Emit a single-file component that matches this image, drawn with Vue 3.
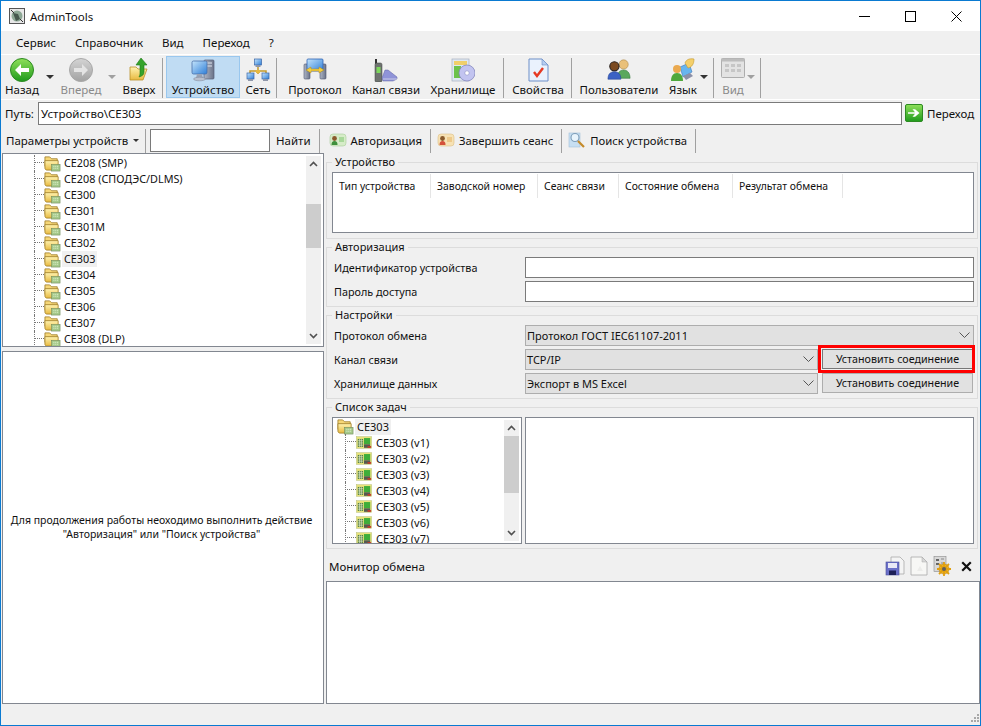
<template>
  <div class="window">
    <svg class="defs" aria-hidden="true">
      <defs>
        <linearGradient id="gGreen" x1="0" y1="0" x2="0" y2="1"><stop offset="0" stop-color="#8fe05a"/><stop offset="1" stop-color="#1f9a1c"/></linearGradient>
        <linearGradient id="gGrey" x1="0" y1="0" x2="0" y2="1"><stop offset="0" stop-color="#d4d4d4"/><stop offset="1" stop-color="#a2a2a2"/></linearGradient>
        <linearGradient id="gFolder" x1="0" y1="0" x2="0" y2="1"><stop offset="0" stop-color="#fff3b0"/><stop offset="1" stop-color="#e8b93f"/></linearGradient>
        <linearGradient id="gBlue" x1="0" y1="0" x2="1" y2="1"><stop offset="0" stop-color="#c4e4fb"/><stop offset="1" stop-color="#2f7fd8"/></linearGradient>
        <linearGradient id="gOlive" x1="0" y1="0" x2="1" y2="0"><stop offset="0" stop-color="#aeb6c6"/><stop offset="1" stop-color="#6b7388"/></linearGradient>
      </defs>

      <symbol id="back" viewBox="0 0 24 24">
        <circle cx="12" cy="12" r="11.5" fill="url(#gGreen)" stroke="#2d8a22"/>
        <path d="M5 12l6-6v4h8v4h-8v4z" fill="#fff"/>
      </symbol>
      <symbol id="forward" viewBox="0 0 24 24">
        <circle cx="12" cy="12" r="11.5" fill="url(#gGrey)" stroke="#a8a8a8"/>
        <path d="M19 12l-6-6v4H5v4h8v4z" fill="#e4e4e4"/>
      </symbol>
      <symbol id="up" viewBox="0 0 24 24">
        <path d="M3 9h6l2 2h9l-4 11H3z" fill="url(#gFolder)" stroke="#b98f2a" stroke-width=".8"/>
        <path d="M14 0l6 7h-3v7c0 3-2 4-5 5 1-2 1-3 1-5V7H9z" fill="#35a32b" stroke="#1f7a1a" stroke-width=".6"/>
      </symbol>
      <symbol id="device" viewBox="0 0 24 24">
        <rect x="13" y="2" width="10" height="19" rx="1" fill="url(#gOlive)" stroke="#586078" stroke-width=".7"/>
        <path d="M15 5h6M15 8h6" stroke="#dfe4ee"/>
        <rect x="1" y="3" width="15" height="13" rx="1.500" fill="url(#gBlue)" stroke="#4a6fa8" stroke-width=".8"/>
        <path d="M6 16h5l1 4H5z" fill="#9aa3b5"/>
        <ellipse cx="8.500" cy="21" rx="6" ry="1.800" fill="#b9c0ce" stroke="#7d8599" stroke-width=".5"/>
      </symbol>
      <symbol id="network" viewBox="0 0 24 24">
        <path d="M12 6v10M4 17V13h16v4" fill="none" stroke="#c49a2a" stroke-width="1.500"/>
        <rect x="8.500" y="1" width="7" height="6" fill="url(#gBlue)" stroke="#3a66a8" stroke-width=".7"/>
        <rect x="9.500" y="7" width="5" height="2" fill="#8f97aa"/>
        <rect x="1" y="15" width="7" height="6" fill="url(#gBlue)" stroke="#3a66a8" stroke-width=".7"/>
        <rect x="2" y="21" width="5" height="2" fill="#8f97aa"/>
        <rect x="16" y="15" width="7" height="6" fill="url(#gBlue)" stroke="#3a66a8" stroke-width=".7"/>
        <rect x="17" y="21" width="5" height="2" fill="#8f97aa"/>
        <rect x="10" y="12" width="4" height="3" fill="#e8b93f"/>
      </symbol>
      <symbol id="protocol" viewBox="0 0 24 24">
        <rect x="1" y="6" width="6" height="15" rx="1" fill="url(#gOlive)" stroke="#4d5670" stroke-width=".6"/>
        <rect x="17" y="6" width="6" height="15" rx="1" fill="url(#gOlive)" stroke="#4d5670" stroke-width=".6"/>
        <rect x="4" y="1" width="16" height="12" rx="1" fill="url(#gBlue)" stroke="#2e62b4" stroke-width=".8"/>
        <path d="M3 12l5-3v2h8V9l5 3-5 3v-2H8v2z" fill="#f4d03f" stroke="#b48a1a" stroke-width=".5"/>
      </symbol>
      <symbol id="channel" viewBox="0 0 24 24">
        <rect x="1" y="1" width="2" height="5" fill="#333"/>
        <rect x="1" y="5" width="7" height="19" rx="1.500" fill="#6f7370" stroke="#3e403e" stroke-width=".5"/>
        <rect x="2.500" y="9" width="4" height="6" fill="#7dd85c"/>
        <path d="M8 20l3-8h3l9 7v2l-4 2H9z" fill="#8f93d8" stroke="#5d60a0" stroke-width=".5"/>
        <path d="M9 21h14" stroke="#c9cbe8"/>
      </symbol>
      <symbol id="storage" viewBox="0 0 24 24">
        <rect x="1" y="1" width="17" height="22" fill="#dfe8f2" stroke="#a6b0c0" stroke-width=".7"/>
        <rect x="3" y="3" width="13" height="4" fill="#f0cf6a"/>
        <rect x="3" y="8" width="7" height="12" fill="#6cc24a"/>
        <circle cx="16" cy="15" r="8" fill="#c2c4f0" stroke="#7d80b8" stroke-width=".7"/>
        <circle cx="16" cy="15" r="2.200" fill="#fff" stroke="#7d80b8" stroke-width=".5"/>
      </symbol>
      <symbol id="props" viewBox="0 0 24 24">
        <path d="M3 1h13l6 6v16H3z" fill="#eaf2fd" stroke="#6d8fc8"/>
        <path d="M16 1v6h6z" fill="#b6cdf0" stroke="#6d8fc8" stroke-width=".6"/>
        <path d="M8 14l3 4 6-8" fill="none" stroke="#e63a24" stroke-width="2.400"/>
      </symbol>
      <symbol id="users" viewBox="0 0 26 24">
        <circle cx="18" cy="6" r="5" fill="#e9c07a" stroke="#a88445" stroke-width=".6"/>
        <path d="M11 21c0-6 3-9 7-9s7 3 7 9z" fill="#5aa85c" stroke="#33783a" stroke-width=".6"/>
        <circle cx="8" cy="8" r="5" fill="#7b4a20" stroke="#2a2320" stroke-width="1.200"/>
        <path d="M1 22c0-6 3-8 7-8s7 2 7 8z" fill="#3b62c4" stroke="#284694" stroke-width=".6"/>
      </symbol>
      <symbol id="lang" viewBox="0 0 24 24">
        <path d="M9 9l9-4 3 9-9 5z" fill="#67b5ee" stroke="#3e74b5" stroke-width=".6"/>
        <path d="M14 5c1-3 4-5 9-4 0 5-2 8-6 9z" fill="#f4cf6a" stroke="#c2982f" stroke-width=".6"/>
        <circle cx="6" cy="11" r="4" fill="#eaa94f"/>
        <path d="M0 23c0-5 2-8 6-8s6 3 6 8z" fill="#4ea83c"/>
        <path d="M12 18l7-3 3 3-7 4z" fill="#8b90a8"/>
      </symbol>
      <symbol id="view" viewBox="0 0 24 24">
        <rect x=".5" y=".5" width="23" height="19" rx="1" fill="#e3e3e3" stroke="#adadad"/>
        <rect x=".5" y=".5" width="23" height="3" fill="#bcbcbc"/>
        <path d="M4 6h4v3H4zM10 6h4v3h-4zM16 6h4v3h-4zM4 11h4v3H4zM10 11h4v3h-4zM16 11h4v3h-4z" fill="#c6c6c6"/>
      </symbol>
      <symbol id="go" viewBox="0 0 18 18">
        <rect x=".5" y=".5" width="17" height="17" rx="1.500" fill="url(#gGreen)" stroke="#2d8a22"/>
        <path d="M3 9.800h7l-2.500 3h2.600L14.500 9 10.100 5.200H7.500l2.500 3H3z" fill="#fff"/>
      </symbol>
      <symbol id="authOn" viewBox="0 0 18 18">
        <rect x="1" y="3" width="16" height="12" rx="3" fill="#d6ecc8" stroke="#a9cf9a" stroke-width=".6"/>
        <circle cx="5.500" cy="7.500" r="2.400" fill="#8a5a2c"/>
        <path d="M2.500 14c0-3 1-4 3-4s3 1 3 4z" fill="#3f8f3c"/>
        <rect x="10" y="6" width="5" height="5" fill="#a8d89a"/>
      </symbol>
      <symbol id="authOff" viewBox="0 0 18 18">
        <rect x="1" y="3" width="16" height="12" rx="3" fill="#f7e2b4" stroke="#dcc087" stroke-width=".6"/>
        <circle cx="5.500" cy="7.500" r="2.400" fill="#8a5a2c"/>
        <path d="M2.500 14c0-3 1-4 3-4s3 1 3 4z" fill="#d4513a"/>
        <rect x="10" y="6" width="5" height="5" fill="#eec98a"/>
      </symbol>
      <symbol id="search" viewBox="0 0 18 18">
        <rect x="1" y="2" width="11" height="14" fill="#c7dff2" stroke="#a4c1da" stroke-width=".6"/>
        <circle cx="7" cy="6.500" r="4" fill="#e8f4fc" stroke="#7d9db8" stroke-width="1.100"/>
        <path d="M10 10l6 6" stroke="#c48a2a" stroke-width="2.200"/>
      </symbol>
      <symbol id="node" viewBox="0 0 18 18">
        <path d="M1 2h5l2 2h6v8H1z" fill="#f6d777" stroke="#a3822c" stroke-width=".9"/>
        <path d="M1 6h14v10H3c-1 0-2-1-2-2z" fill="url(#gFolder)" stroke="#a3822c" stroke-width=".9"/>
        <rect x="8" y="10" width="9" height="7" fill="#a5c98b" stroke="#6d8a5a" stroke-width=".6"/>
        <path d="M10 12h1M12 12h1M14 12h1M10 14h1M12 14h1M14 14h1" stroke="#eaf8d8"/>
      </symbol>
      <symbol id="task" viewBox="0 0 18 14">
        <rect x=".5" y=".5" width="17" height="13" fill="#e8e27a" stroke="#b8c27a" stroke-width=".6"/>
        <rect x="2" y="3" width="6" height="9" fill="#55803f"/>
        <path d="M2 5h6M2 7.500h6M2 10h6M4 3v9M6 3v9" stroke="#e8efd4" stroke-width=".7"/>
        <rect x="9" y="2" width="7" height="7" fill="#3fae3a"/>
        <rect x="9" y="9" width="7" height="4" fill="#565a50"/>
        <rect x="13" y="11" width="4" height="2" fill="#c63a2a"/>
      </symbol>
      <symbol id="save" viewBox="0 0 20 20">
        <path d="M6 1h9l4 4v13H6z" fill="#f4f4f4" stroke="#aaa" stroke-width=".8"/>
        <rect x="1" y="6" width="13" height="13" fill="#6a6fc8" stroke="#4a4e9a" stroke-width=".6"/>
        <rect x="3" y="7" width="9" height="5" fill="#e8e8f6"/>
        <rect x="4" y="14.500" width="7" height="4.500" fill="#1e2058"/>
      </symbol>
      <symbol id="doc" viewBox="0 0 20 20">
        <path d="M2 1h11l5 5v13H2z" fill="#f7f7f5" stroke="#a8a8a8" stroke-width=".8"/>
        <path d="M13 1v5h5z" fill="#d8d8d8" stroke="#a8a8a8" stroke-width=".5"/>
        <path d="M8 15l3-5 3 5z" fill="#ececea"/>
      </symbol>
      <symbol id="logcfg" viewBox="0 0 20 20">
        <rect x="1" y=".5" width="12" height="15" fill="#d8d8d8" stroke="#8a8a8a" stroke-width=".6"/>
        <path d="M3 3h3v2H3zM3 7h3v2H3z" fill="#666"/>
        <path d="M8 3h3M8 7h3" stroke="#888"/>
        <circle cx="11" cy="13" r="5" fill="#f0b322" stroke="#b87d10" stroke-width=".6"/>
        <path d="M11 6v14M4 13h14M6 8l10 10M16 8L6 18" stroke="#e0a010" stroke-width="1.800"/>
        <circle cx="11" cy="13" r="2" fill="#5f5f5f"/>
      </symbol>
    </svg>

    <header class="titlebar">
      <span class="app-icon">
        <svg viewBox="0 0 16 16" width="16" height="16">
          <rect x=".5" y=".5" width="15" height="15" fill="#e8e8e8" stroke="#555"/>
          <circle cx="8" cy="8" r="5.500" fill="#8ea896"/>
          <path d="M4 5l5 1 2 5-4 2z" fill="#46584e"/>
          <path d="M2 2l3 3M14 14l-3-3" stroke="#333"/>
        </svg>
      </span>
      <span class="app-name">AdminTools</span>
      <div class="win-btns">
        <svg width="11" height="11" viewBox="0 0 11 11"><path d="M0 5.500h11" stroke="#000"/></svg>
        <svg width="11" height="11" viewBox="0 0 11 11"><rect x=".5" y=".5" width="10" height="10" fill="none" stroke="#000"/></svg>
        <svg width="11" height="11" viewBox="0 0 11 11"><path d="M.5.500l10 10M10.500.500l-10 10" stroke="#000"/></svg>
      </div>
    </header>

    <nav class="menubar">
      <span v-for="m in menu" :key="m">{{ m }}</span>
    </nav>

    <div class="toolbar">
      <template v-for="t in toolbar" :key="t.label">
        <button class="tool" :class="{ active: t.active, off: t.off }" :style="{ width: t.w + 'px', marginLeft: (t.ml || 0) + 'px' }">
          <span class="tool-top">
            <svg class="tool-icon"><use :href="'#' + t.icon" /></svg>
            <i v-if="t.caret" class="caret" :class="{ grey: t.off }" :style="{ left: 24 + t.caret + 'px' }"></i>
          </span>
          <span>{{ t.label }}</span>
        </button>
        <span v-if="t.sep" class="sep" :style="{ marginLeft: t.sep + 'px' }"></span>
      </template>
    </div>

    <div class="path-row">
      <span class="path-label">Путь:</span>
      <div class="field path-field">Устройство\CE303</div>
      <svg class="go-icon"><use href="#go" /></svg>
      <span class="go-label">Переход</span>
    </div>

    <div class="search-row">
      <span class="params">Параметры устройств<i class="caret dark"></i></span>
      <span class="sep tall"></span>
      <div class="field search-field"></div>
      <span class="find">Найти</span>
      <span class="sep tall"></span>
      <template v-for="a in actions" :key="a.label">
        <span class="action"><svg class="action-icon" :style="{ marginLeft: a.ml + 'px' }"><use :href="'#' + a.icon" /></svg>{{ a.label }}</span>
        <span class="sep tall"></span>
      </template>
    </div>

    <main class="main">
      <section class="left">
        <div class="box tree-box">
          <div class="tree-list">
            <div v-for="d in devices" :key="d" class="tree-row">
              <i class="dots"></i>
              <svg class="node-icon"><use href="#node" /></svg>
              <span class="node-label" :class="{ picked: d === 'CE303' }">{{ d }}</span>
            </div>
          </div>
          <div class="scroll">
            <svg class="arrow" viewBox="0 0 9 6"><path d="M1 5l3.500-3.500L8 5" fill="none" stroke="#505050" stroke-width="1.600"/></svg>
            <div class="track"><i class="thumb thumb-tree"></i></div>
            <svg class="arrow" viewBox="0 0 9 6"><path d="M1 1l3.500 3.500L8 1" fill="none" stroke="#505050" stroke-width="1.600"/></svg>
          </div>
        </div>
        <div class="box hint-box">
          <p>Для продолжения работы неоходимо выполнить действие<br />"Авторизация" или "Поиск устройства"</p>
        </div>
      </section>

      <section class="right">
        <fieldset class="group group-device">
          <legend>Устройство</legend>
          <div class="box device-list">
            <span v-for="c in columns" :key="c.label" class="col" :style="{ width: c.w + 'px' }">{{ c.label }}</span>
          </div>
        </fieldset>

        <fieldset class="group group-form">
          <legend>Авторизация</legend>
          <div class="form-row"><label>Идентификатор устройства</label><div class="field grow"></div></div>
          <div class="form-row"><label>Пароль доступа</label><div class="field grow"></div></div>
        </fieldset>

        <fieldset class="group group-form">
          <legend>Настройки</legend>
          <div class="form-row">
            <label>Протокол обмена</label>
            <div class="combo grow">Протокол ГОСТ IEC61107-2011<svg viewBox="0 0 11 6"><path d="M.5.500l5 5 5-5" fill="none" stroke="#555"/></svg></div>
          </div>
          <div class="form-row">
            <label>Канал связи</label>
            <div class="combo grow">TCP/IP<svg viewBox="0 0 11 6"><path d="M.5.500l5 5 5-5" fill="none" stroke="#555"/></svg></div>
            <button class="connect marked">Установить соединение</button>
          </div>
          <div class="form-row">
            <label>Хранилище данных</label>
            <div class="combo grow">Экспорт в MS Excel<svg viewBox="0 0 11 6"><path d="M.5.500l5 5 5-5" fill="none" stroke="#555"/></svg></div>
            <button class="connect">Установить соединение</button>
          </div>
        </fieldset>

        <fieldset class="group group-tasks">
          <legend>Список задач</legend>
          <div class="tasks">
            <div class="box task-tree">
              <div class="task-list">
                <div class="task-root">
                  <svg class="node-icon"><use href="#node" /></svg>
                  <span class="node-label picked">CE303</span>
                </div>
                <div v-for="v in 7" :key="v" class="task-row">
                  <i class="dots short"></i>
                  <svg class="task-icon"><use href="#task" /></svg>
                  <span>CE303 (v{{ v }})</span>
                </div>
              </div>
              <div class="scroll">
                <svg class="arrow" viewBox="0 0 9 6"><path d="M1 5l3.500-3.500L8 5" fill="none" stroke="#505050" stroke-width="1.600"/></svg>
                <div class="track"><i class="thumb thumb-task"></i></div>
                <svg class="arrow" viewBox="0 0 9 6"><path d="M1 1l3.500 3.500L8 1" fill="none" stroke="#505050" stroke-width="1.600"/></svg>
              </div>
            </div>
            <div class="box task-detail"></div>
          </div>
        </fieldset>

        <div class="monitor-head">
          <span>Монитор обмена</span>
          <div class="monitor-tools">
            <svg><use href="#save" /></svg>
            <svg><use href="#doc" /></svg>
            <svg><use href="#logcfg" /></svg>
            <svg class="close-x" viewBox="0 0 9 9"><path d="M1 1l7 7M8 1L1 8" stroke="#111" stroke-width="1.800"/></svg>
          </div>
        </div>
        <div class="box monitor"></div>
      </section>
    </main>

    <footer class="statusbar">
      <svg class="grip" viewBox="0 0 12 12"><path d="M9 1h2v2H9zM6 4h2v2H6zM9 4h2v2H9zM3 7h2v2H3zM6 7h2v2H6zM9 7h2v2H9z" fill="#a8a8a8"/></svg>
    </footer>
  </div>
</template>

<script setup>
const menu = ['Сервис', 'Справочник', 'Вид', 'Переход', '?']

// w and ml are button widths and gaps, sep is the gap before the separator, caret is its offset from the icon
const toolbar = [
  { label: 'Назад', icon: 'back', w: 40, caret: 12 },
  { label: 'Вперед', icon: 'forward', w: 78, caret: 15, off: true },
  { label: 'Вверх', icon: 'up', w: 38, sep: 4 },
  { label: 'Устройство', icon: 'device', w: 74, ml: 3, active: true },
  { label: 'Сеть', icon: 'network', w: 28, ml: 4, sep: 4 },
  { label: 'Протокол', icon: 'protocol', w: 70, ml: 3 },
  { label: 'Канал связи', icon: 'channel', w: 72 },
  { label: 'Хранилище', icon: 'storage', w: 78, ml: 2, sep: 1 },
  { label: 'Свойства', icon: 'props', w: 62, ml: 3, sep: 2 },
  { label: 'Пользователи', icon: 'users', w: 88, ml: 3 },
  { label: 'Язык', icon: 'lang', w: 40, caret: 5, sep: 10 },
  { label: 'Вид', icon: 'view', w: 32, ml: 3, caret: 2, off: true, sep: 11 }
]

const actions = [
  { label: 'Авторизация', icon: 'authOn', ml: 3 },
  { label: 'Завершить сеанс', icon: 'authOff', ml: 0 },
  { label: 'Поиск устройства', icon: 'search', ml: 0 }
]

const devices = [
  'CE208 (SMP)', 'CE208 (СПОДЭС/DLMS)', 'CE300', 'CE301', 'CE301M', 'CE302',
  'CE303', 'CE304', 'CE305', 'CE306', 'CE307', 'CE308 (DLP)'
]

const columns = [
  { label: 'Тип устройства', w: 98 },
  { label: 'Заводской номер', w: 107 },
  { label: 'Сеанс связи', w: 81 },
  { label: 'Состояние обмена', w: 114 },
  { label: 'Результат обмена', w: 110 }
]
</script>

<style scoped>
.window {
  width: 981px;
  height: 726px;
  display: flex;
  flex-direction: column;
  box-sizing: border-box;
  border: 1px solid #0a7ad1;
  background: #f0f0f0;
  color: #111;
  font-family: "Noto Sans", "Liberation Sans", sans-serif;
  font-size: 11.5px;
  overflow: hidden;
}

.defs {
  position: absolute;
  width: 0;
  height: 0;
}

.titlebar {
  height: 30px;
  flex: none;
  display: flex;
  align-items: center;
  padding-left: 8px;
  background: #fff;
}

.app-icon {
  display: flex;
  margin-right: 5px;
}

.win-btns {
  margin-left: auto;
  display: flex;
  gap: 35px;
  padding-right: 18px;
}

.menubar {
  height: 23px;
  flex: none;
  display: flex;
  align-items: center;
  gap: 19px;
  padding-left: 15px;
}

.toolbar {
  height: 46px;
  flex: none;
  display: flex;
  align-items: stretch;
  padding: 1px 0 1px 1px;
  border-top: 1px solid #fff;
  border-bottom: 1px solid #fff;
  box-sizing: border-box;
}

.tool {
  all: unset;
  box-sizing: border-box;
  display: flex;
  flex-direction: column;
  align-items: center;
  justify-content: space-between;
  padding: 1px 0 2px;
  font: inherit;
  white-space: nowrap;
  border: 1px solid transparent;
}

.tool.active {
  background: #c0dcf3;
  border-color: #99c7ee;
}

.tool.off {
  color: #8a8a8a;
}

.tool-top {
  display: flex;
  align-items: center;
  position: relative;
}

.tool-icon {
  width: 24px;
  height: 24px;
}

.caret {
  position: absolute;
  top: 17px;
  border: 4px solid transparent;
  border-top-color: #333;
  border-bottom: 0;
}

.caret.grey {
  border-top-color: #a0a0a0;
}

.caret.dark {
  position: static;
  display: inline-block;
  margin-left: 5px;
  border-width: 3px;
  border-bottom: 0;
}

.sep {
  width: 1px;
  flex: none;
  margin-top: 2px;
  background: #a0a0a0;
}

.sep.tall {
  margin: 2px 0 0;
}

.path-row {
  height: 26px;
  flex: none;
  display: flex;
  align-items: center;
  padding-left: 4px;
}

.path-label {
  width: 33px;
  flex: none;
}

.field {
  box-sizing: border-box;
  border: 1px solid #7a7a7a;
  background: #fff;
}

.path-field {
  width: 864px;
  height: 23px;
  line-height: 21px;
  padding-left: 2px;
}

.go-icon {
  width: 18px;
  height: 18px;
  margin: 0 4px 0 3px;
}

.search-row {
  height: 27px;
  flex: none;
  display: flex;
  align-items: stretch;
  padding: 1px 0 0 5px;
  box-sizing: border-box;
}

.params,
.find,
.action {
  display: flex;
  align-items: center;
}

.params {
  width: 139px;
}

.search-field {
  width: 120px;
  height: 23px;
  margin-left: 4px;
  align-self: center;
}

.find {
  margin: 0 8px 0 6px;
}

.action {
  padding: 0 8px 0 6px;
  font-size: 11.3px;
}

.action-icon {
  width: 18px;
  height: 18px;
  margin-right: 4px;
}

.main {
  flex: 1;
  min-height: 0;
  display: flex;
  gap: 2px;
  padding-left: 1px;
}

.left {
  width: 322px;
  flex: none;
  display: flex;
  flex-direction: column;
  gap: 4px;
}

.box {
  box-sizing: border-box;
  border: 1px solid #828790;
  background: #fff;
}

.tree-box {
  height: 194px;
  flex: none;
  display: flex;
  overflow: hidden;
  font-size: 10.8px;
}

.tree-list {
  flex: 1;
  padding-top: 1px;
}

.tree-row {
  height: 16px;
  display: flex;
  align-items: center;
  padding-left: 31px;
  position: relative;
}

.dots {
  width: 10px;
  height: 1px;
  flex: none;
  border-top: 1px dotted #777;
}

.tree-row::before {
  content: "";
  position: absolute;
  left: 31px;
  top: 0;
  bottom: 0;
  border-left: 1px dotted #777;
}

.node-icon {
  width: 17px;
  height: 17px;
  flex: none;
  margin-right: 1px;
}

.node-label {
  padding: 0 2px;
  line-height: 16px;
}

.node-label.picked {
  background: #f0f0f0;
}

.scroll {
  width: 15px;
  flex: none;
  margin: 2px 2px 2px 0;
  display: flex;
  flex-direction: column;
  background: #f0f0f0;
}

.arrow {
  width: 15px;
  height: 16px;
  flex: none;
  padding: 5px 3px;
  box-sizing: border-box;
}

.track {
  flex: 1;
  min-height: 0;
}

.thumb {
  display: block;
  background: #cdcdcd;
}

.thumb-tree {
  height: 44px;
  margin-top: 32px;
}

.thumb-task {
  height: 57px;
}

.hint-box {
  flex: 1;
  min-height: 0;
  display: flex;
  align-items: center;
  justify-content: center;
  text-align: center;
  font-size: 10.5px;
}

.hint-box p {
  margin: 0 3px 2px 0;
  line-height: 14px;
}

.right {
  flex: 1;
  min-width: 0;
  display: flex;
  flex-direction: column;
  padding-top: 2px;
  font-size: 11px;
}

.group {
  margin: 0 2px 0 0;
  padding: 0 3px 0 5px;
  border: 1px solid #dcdcdc;
  min-width: 0;
}

.group legend {
  padding: 0 3px;
  line-height: 14px;
}

.group-device {
  height: 84px;
  box-sizing: border-box;
}

.device-list {
  height: 61px;
  margin-top: 3px;
  display: flex;
  align-items: flex-start;
  padding-top: 1px;
  font-size: 10.4px;
}

.col {
  box-sizing: border-box;
  height: 24px;
  line-height: 24px;
  padding-left: 6px;
  white-space: nowrap;
  border-right: 1px solid #e5e5e5;
}

.group-form {
  padding-top: 1px;
  padding-bottom: 3px;
  margin-top: 1px;
}

.form-row {
  height: 24px;
  display: flex;
  align-items: center;
  gap: 2px;
}

.form-row label {
  width: 191px;
  flex: none;
  box-sizing: border-box;
  padding-left: 2px;
  font-size: 10.8px;
}

.grow {
  flex: 1;
  min-width: 0;
  height: 21px;
}

.combo {
  box-sizing: border-box;
  display: flex;
  align-items: center;
  justify-content: space-between;
  padding: 0 3px 0 1px;
  background: #e1e1e1;
  border: 1px solid #adadad;
}

.combo svg {
  width: 11px;
  height: 6px;
}

.connect {
  all: unset;
  box-sizing: border-box;
  width: 151px;
  height: 20px;
  margin: 0 1px 0 2px;
  text-align: center;
  font: inherit;
  font-size: 10.7px;
  color: inherit;
  background: #e1e1e1;
  border: 1px solid #adadad;
  position: relative;
}

.connect.marked {
  border-color: #777;
}

.connect.marked::after {
  content: "";
  position: absolute;
  inset: -5px -3px -5px -5px;
  border: 3px solid #f00;
}

.group-tasks {
  height: 149px;
  box-sizing: border-box;
  margin-top: 1px;
}

.tasks {
  height: 127px;
  margin-top: 3px;
  display: flex;
  gap: 3px;
}

.task-tree {
  width: 190px;
  flex: none;
  display: flex;
  overflow: hidden;
}

.task-detail {
  flex: 1;
}

.task-list {
  flex: 1;
  padding: 1px 0 0 4px;
}

.task-root,
.task-row {
  height: 16px;
  display: flex;
  align-items: center;
}

.task-root {
  height: 15px;
}

.task-row {
  padding-left: 8px;
  position: relative;
}

.task-row::before {
  content: "";
  position: absolute;
  left: 8px;
  top: 0;
  bottom: 0;
  border-left: 1px dotted #777;
}

.dots.short {
  width: 11px;
}

.task-icon {
  width: 16px;
  height: 13px;
  flex: none;
  margin-right: 4px;
}

.monitor-head {
  height: 32px;
  flex: none;
  display: flex;
  align-items: center;
  justify-content: space-between;
  padding: 2px 8px 0 3px;
  box-sizing: border-box;
  font-size: 11.5px;
}

.monitor-tools {
  display: flex;
  align-items: center;
  gap: 4px;
}

.monitor-tools svg {
  width: 20px;
  height: 20px;
}

.monitor-tools .close-x {
  width: 11px;
  height: 11px;
  margin-left: 4px;
}

.monitor {
  flex: 1;
  min-height: 0;
}

.statusbar {
  height: 21px;
  flex: none;
  display: flex;
  justify-content: flex-end;
  align-items: flex-end;
}

.grip {
  width: 12px;
  height: 12px;
}
</style>

<style>
html,
body {
  margin: 0;
  background: #f0f0f0;
}
</style>
